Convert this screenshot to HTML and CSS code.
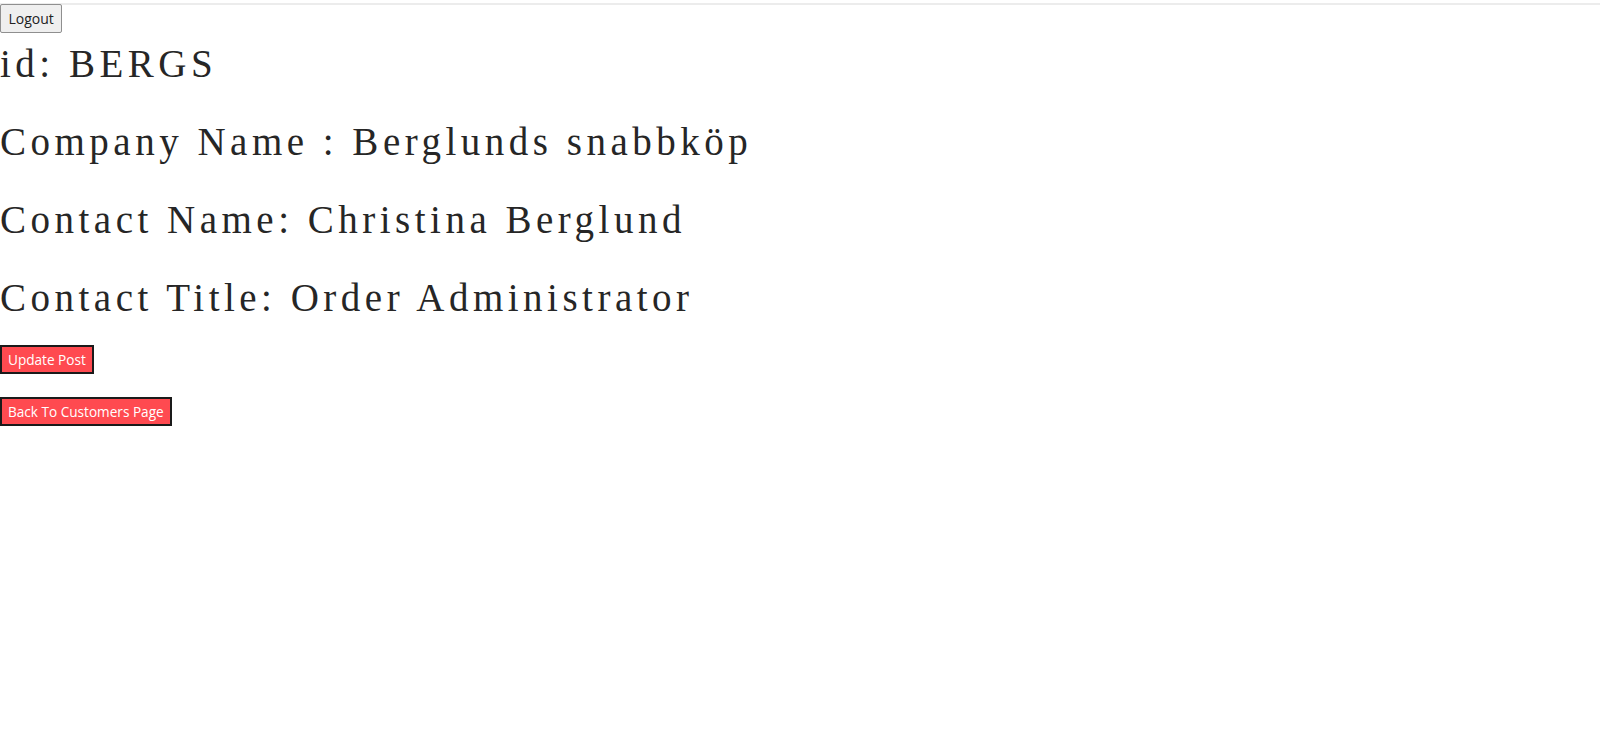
FILE: index.html
```html
<!DOCTYPE html>
<html lang="en">
<head>
<meta charset="utf-8">
<title>Customer</title>
<link rel="stylesheet" href="styles.css">
</head>
<body>
<div class="topline"></div>
<header class="bar">
  <button class="logout">Logout</button>
</header>
<main class="details">
  <h1 class="field">id: BERGS</h1>
  <h1 class="field">Company Name : Berglunds snabbköp</h1>
  <h1 class="field">Contact Name: Christina Berglund</h1>
  <h1 class="field">Contact Title: Order Administrator</h1>
  <div class="actions">
    <button class="btn-red">Update Post</button>
    <button class="btn-red">Back To Customers Page</button>
  </div>
</main>
</body>
</html>
```
FILE: styles.css
```css
html, body {
  margin: 0;
  padding: 0;
  background: #fff;
}
body {
  font-family: "Open Sans", "Noto Sans", sans-serif;
}
.topline {
  height: 2px;
  margin-top: 3px;
  background: #ececec;
}
.bar {
  display: flex;
}
.logout {
  margin-top: -1px;
  font-family: "Open Sans", "Noto Sans", sans-serif;
  font-size: 14px;
  color: #222;
  background: #efefef;
  border: 1px solid #8f8f8f;
  border-radius: 2px;
  height: 29px;
  padding: 0 7.5px;
}
.details {
  display: flex;
  flex-direction: column;
  align-items: flex-start;
}
.field {
  font-family: "Liberation Serif", "Times New Roman", serif;
  font-weight: normal;
  font-size: 39px;
  line-height: 45px;
  letter-spacing: 4.5px;
  color: #262626;
  margin: 0 0 33px 0;
}
.field:first-child {
  margin-top: 8px;
}
.field:last-of-type {
  margin-bottom: 25px;
}
.actions {
  display: flex;
  flex-direction: column;
  align-items: flex-start;
  gap: 23px;
}
.btn-red {
  font-family: "Open Sans", "Noto Sans", sans-serif;
  font-size: 13.6px;
  color: #fff;
  background: #ff4a50;
  border: 2px solid #1a1a1a;
  height: 29px;
  padding: 0 6px;
}
```
